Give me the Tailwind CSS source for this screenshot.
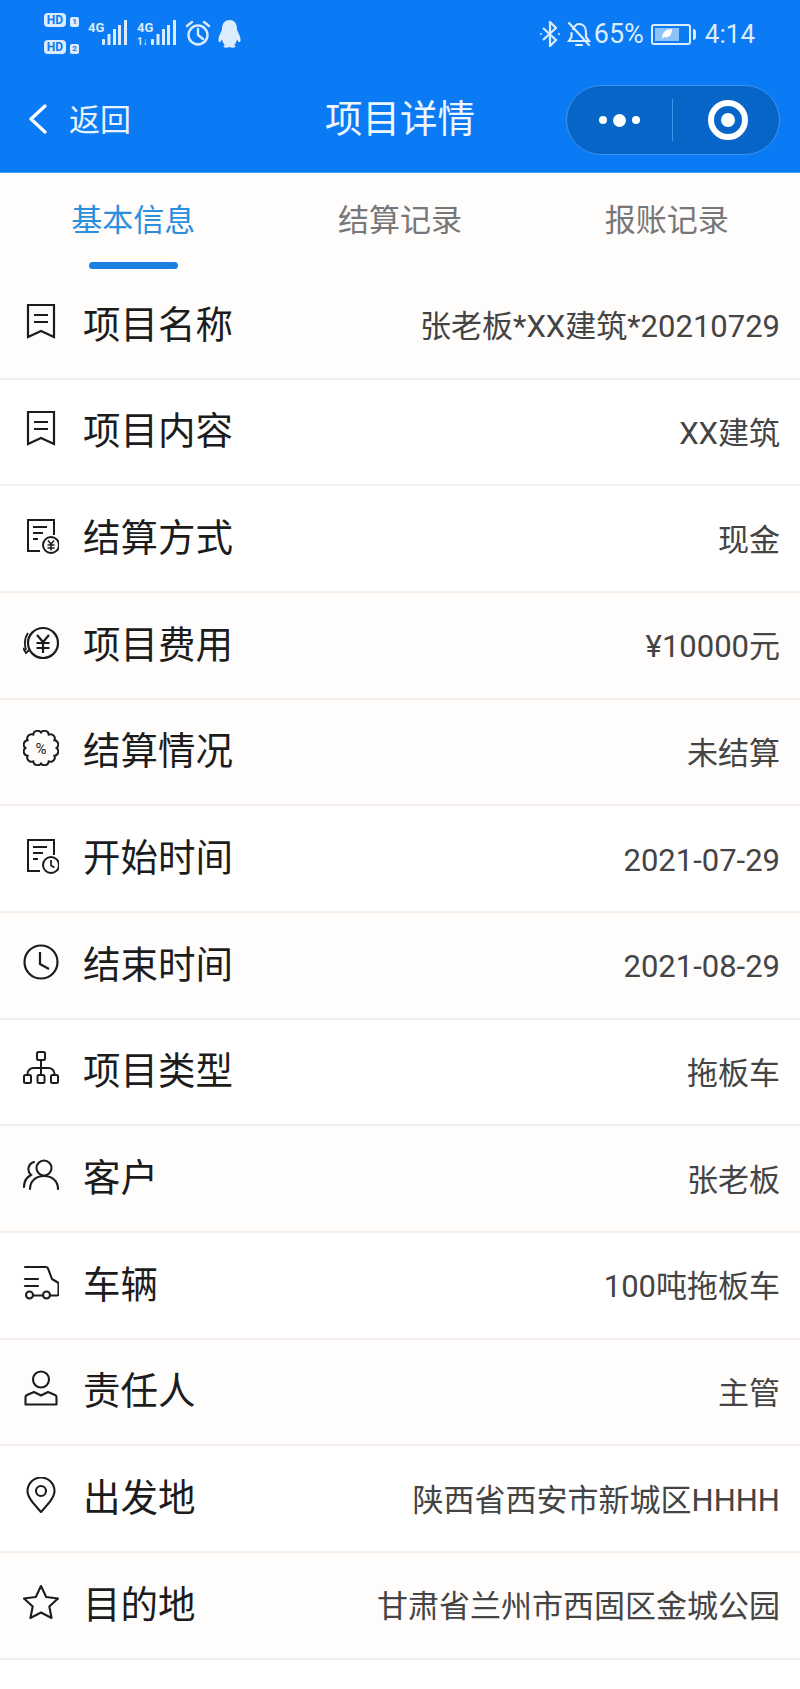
<!DOCTYPE html>
<html lang="zh">
<head>
    <meta charset="UTF-8">
    <meta name="viewport" content="width=device-width, initial-scale=1.0">
    <title>项目详情</title>
    <script src="https://cdn.jsdelivr.net/npm/@tailwindcss/browser@4"></script>
</head>
<body class="bg-white font-['Roboto','Noto_Sans_CJK_SC',sans-serif]">
<div class="w-[800px] h-[1689px] overflow-hidden bg-white">

    <!-- Header -->
    <div class="bg-[#0a7bf4] h-[173px] border-b border-[#3c9bf5]">
        <!-- Status bar -->
        <div class="h-[66px] flex items-start justify-between pl-[44px] pr-[45px] text-[#dcecff]">
            <div class="flex items-start pt-[13px]">
                <div class="flex flex-col gap-[13px] w-[44px]">
                    <div class="flex items-end gap-[4px]">
                        <span class="w-[22px] h-[14px] rounded-[4px] bg-[#dcecff] text-[#0a7bf4] text-[12px] leading-[14px] font-bold text-center">HD</span>
                        <span class="w-[9px] h-[10px] rounded-[2px] bg-[#dcecff] text-[#0a7bf4] text-[8px] leading-[10px] font-bold text-center">1</span>
                    </div>
                    <div class="flex items-end gap-[4px]">
                        <span class="w-[22px] h-[14px] rounded-[4px] bg-[#dcecff] text-[#0a7bf4] text-[12px] leading-[14px] font-bold text-center">HD</span>
                        <span class="w-[9px] h-[10px] rounded-[2px] bg-[#dcecff] text-[#0a7bf4] text-[8px] leading-[10px] font-bold text-center">2</span>
                    </div>
                </div>
                <svg class="w-[40px] h-[34px]" viewBox="0 0 40 34" fill="currentColor">
                    <text x="0" y="19" font-size="13" font-weight="700" font-family="Roboto">4G</text>
                    <rect x="14" y="26" width="3" height="6" rx="1"/><rect x="19.500" y="21" width="3" height="11"/><rect x="25" y="16" width="3" height="16"/><rect x="30" y="12" width="3" height="20"/><rect x="36" y="7" width="3" height="25"/>
                </svg>
                <svg class="w-[40px] h-[34px] ml-[9px]" viewBox="0 0 40 34" fill="currentColor">
                    <text x="0" y="19" font-size="13" font-weight="700" font-family="Roboto">4G</text>
                    <text x="0" y="32" font-size="10" font-weight="700" font-family="Roboto">1↓</text>
                    <rect x="14" y="26" width="3" height="6" rx="1"/><rect x="19.500" y="21" width="3" height="11"/><rect x="25" y="16" width="3" height="16"/><rect x="30" y="12" width="3" height="20"/><rect x="36" y="7" width="3" height="25"/>
                </svg>
                <svg class="w-[26px] h-[28px] ml-[8px] mt-[7px]" viewBox="0 0 26 28" fill="none" stroke="currentColor" stroke-width="2.400" stroke-linecap="round">
                    <circle cx="13" cy="15" r="9.500"/><path d="M13 9v6l5 4"/><path d="M2 6l5-4M24 6l-5-4"/>
                </svg>
                <svg class="w-[23px] h-[28px] ml-[7px] mt-[7px]" viewBox="0 0 23 28" fill="currentColor">
                    <path d="M11.500 0C6 0 4 4.500 4 9c0 2-3 6-3.500 10-.300 2.500.500 3.500 1.500 3 .700-.300 1.300-1.300 2-2.500C5 23 6 24.500 7 25c-1.500.700-2 1.500-1 2.300 1.500.800 4 .500 5.500-.300 1.500.800 4 1.100 5.500.300 1-.800.500-1.600-1-2.300 1-.500 2-2 3-5.500.700 1.200 1.300 2.200 2 2.500 1 .500 1.800-.500 1.500-3C22 15 19 11 19 9c0-4.500-2-9-7.500-9z"/>
                </svg>
            </div>
            <div class="flex items-center pt-[19px]">
                <svg class="w-[22px] h-[26px]" viewBox="0 0 22 26" fill="none" stroke="currentColor" stroke-width="2.200">
                    <path d="M4 7l13 12-6 6V1l6 6L4 19"/><circle cx="2" cy="13" r="1" fill="currentColor" stroke="none"/><circle cx="20" cy="13" r="1" fill="currentColor" stroke="none"/>
                </svg>
                <svg class="w-[24px] h-[26px] ml-[6px]" viewBox="0 0 24 26" fill="none" stroke="currentColor" stroke-width="2.200" stroke-linecap="round">
                    <path d="M6 8c2-4 4-5 6-5 4 0 7 3 7 8v5l3 4H7M4.500 12v4L2 20h4M9 24h6M2 2l20 22"/>
                </svg>
                <span class="text-[27px] leading-[30px] ml-[3px]">65%</span>
                <div class="w-[40px] h-[21px] ml-[7px] rounded-[3px] border-2 border-[#dcecff] p-[2px]">
                    <div class="w-[24px] h-full bg-[#8ec3fa] flex items-center justify-center">
                        <svg class="w-[12px] h-[12px]" viewBox="0 0 12 12" fill="#fff"><path d="M1 11C1 4 5 1 11 1c0 7-4 9-8 8z"/></svg>
                    </div>
                </div>
                <div class="w-[3px] h-[11px] ml-[2px] bg-[#dcecff] rounded-r-sm"></div>
                <span class="text-[26px] leading-[30px] ml-[9px]">4:14</span>
            </div>
        </div>
        <!-- Nav bar -->
        <div class="h-[106px] grid grid-cols-[1fr_auto_1fr] items-center px-[20px] text-white">
            <div class="flex items-center pl-[8px]">
                <svg class="w-[20px] h-[30px]" viewBox="0 0 20 30" fill="none" stroke="currentColor" stroke-width="3.200" stroke-linecap="round" stroke-linejoin="round"><path d="M17 2L3 15l14 13"/></svg>
                <span class="text-[31px] leading-[40px] ml-[21px] mt-[4px] text-[#e8f3ff]">返回</span>
            </div>
            <div class="text-[37.500px] leading-[46px] text-[#eef6ff]">项目详情</div>
            <div class="flex justify-end">
                <div class="w-[214px] h-[70px] mt-[2px] rounded-full bg-[#0865c8] border border-[#3f93ea] flex items-center">
                    <div class="w-[106px] h-[42px] flex items-center justify-center gap-[6px] border-r border-[#3f93ea]">
                        <span class="w-[8px] h-[8px] rounded-full bg-white"></span>
                        <span class="w-[13px] h-[13px] rounded-full bg-white"></span>
                        <span class="w-[8px] h-[8px] rounded-full bg-white"></span>
                    </div>
                    <div class="flex-1 flex items-center justify-center pl-[4px]">
                        <div class="w-[40px] h-[40px] rounded-full border-[6px] border-white flex items-center justify-center">
                            <span class="w-[14px] h-[14px] rounded-full bg-white"></span>
                        </div>
                    </div>
                </div>
            </div>
        </div>
    </div>

    <!-- Tabs -->
    <div class="h-[100px] grid grid-cols-3 bg-[#fffcfc]">
        <div class="flex flex-col items-center pt-[29px]">
            <span class="text-[31px] leading-[38px] text-[#2b8fdd]">基本信息</span>
            <span class="w-[89px] h-[7px] mt-[22px] rounded-full bg-[#1a7fe0]"></span>
        </div>
        <div class="flex flex-col items-center pt-[29px]">
            <span class="text-[31px] leading-[38px] text-[#777]">结算记录</span>
        </div>
        <div class="flex flex-col items-center pt-[29px]">
            <span class="text-[31px] leading-[38px] text-[#777]">报账记录</span>
        </div>
    </div>

    <!-- Detail rows -->
    <div class="text-[#1c1c1c]">
        <div class="h-[106.670px] flex items-center pl-[23px] pr-[20px] border-b-2 border-[#f4efed] bg-[#fffcfc]">
            <svg class="w-9 h-9 mb-[9px] shrink-0" viewBox="0 0 36 36" fill="none" stroke="currentColor" stroke-width="2.200"><path d="M5 2h26v32l-13-6-13 6z"/><path d="M11 12h14M11 19h14"/></svg>
            <span class="ml-[24px] mb-[1px] text-[37.500px] leading-[46px]">项目名称</span>
            <span class="ml-auto mt-[4px] text-[31px] leading-[38px] text-[#444]">张老板*XX建筑*20210729</span>
        </div>
        <div class="h-[106.670px] flex items-center pl-[23px] pr-[20px] border-b-2 border-[#f4efed]">
            <svg class="w-9 h-9 mb-[7px] shrink-0" viewBox="0 0 36 36" fill="none" stroke="currentColor" stroke-width="2.200"><path d="M5 2h26v32l-13-6-13 6z"/><path d="M11 12h14M11 19h14"/></svg>
            <span class="ml-[24px] mb-[1px] text-[37.500px] leading-[46px]">项目内容</span>
            <span class="ml-auto mt-[4px] text-[31px] leading-[38px] text-[#444]">XX建筑</span>
        </div>
        <div class="h-[106.670px] flex items-center pl-[23px] pr-[20px] border-b-2 border-[#f4efed]">
            <svg class="w-9 h-9 mb-[5px] shrink-0" viewBox="0 0 36 36" fill="none" stroke="currentColor" stroke-width="2">
                <path d="M17 33H5V2h26v15"/><path d="M10 9h14M10 15h10M10 21h5"/><circle cx="28" cy="27" r="8"/>
                <path d="M25 22.500l3 3.500 3-3.500M24.500 27h7M24.500 30h7M28 26v6.500" stroke-width="1.500"/>
            </svg>
            <span class="ml-[24px] mb-[1px] text-[37.500px] leading-[46px]">结算方式</span>
            <span class="ml-auto mt-[4px] text-[31px] leading-[38px] text-[#444]">现金</span>
        </div>
        <div class="h-[106.670px] flex items-center pl-[23px] pr-[20px] border-b-2 border-[#f4efed] bg-[#fffcfc]">
            <svg class="w-9 h-9 mb-[5px] shrink-0" viewBox="0 0 36 36" fill="none" stroke="currentColor" stroke-width="2.200">
                <circle cx="20" cy="18" r="15"/>
                <path d="M14 10l6 7 6-7M13.500 18h13M13.500 23h13M20 17v11"/>
                <path d="M5 8C1.500 13 1.500 20 3 25M0 23l3 5 3-3" stroke-width="1.800"/>
            </svg>
            <span class="ml-[24px] mb-[1px] text-[37.500px] leading-[46px]">项目费用</span>
            <span class="ml-auto mt-[4px] text-[31px] leading-[38px] text-[#444]">¥10000元</span>
        </div>
        <div class="h-[106.670px] flex items-center pl-[23px] pr-[20px] border-b-2 border-[#f4efed] bg-[#fffcfc]">
            <svg class="w-9 h-9 mb-[7px] shrink-0" viewBox="0 0 36 36" fill="none" stroke="currentColor" stroke-width="2">
                <path d="M33.500 18A4.300 4.300 0 0 1 31.420 25.750A4.300 4.300 0 0 1 25.750 31.420A4.300 4.300 0 0 1 18 33.500A4.300 4.300 0 0 1 10.250 31.420A4.300 4.300 0 0 1 4.580 25.750A4.300 4.300 0 0 1 2.500 18A4.300 4.300 0 0 1 4.580 10.250A4.300 4.300 0 0 1 10.250 4.580A4.300 4.300 0 0 1 18 2.500A4.300 4.300 0 0 1 25.750 4.580A4.300 4.300 0 0 1 31.420 10.250A4.300 4.300 0 0 1 33.500 18z"/>
                <text x="18" y="23.500" text-anchor="middle" font-size="15" fill="currentColor" stroke="none" font-family="Roboto">%</text>
            </svg>
            <span class="ml-[24px] mb-[1px] text-[37.500px] leading-[46px]">结算情况</span>
            <span class="ml-auto mt-[4px] text-[31px] leading-[38px] text-[#444]">未结算</span>
        </div>
        <div class="h-[106.670px] flex items-center pl-[23px] pr-[20px] border-b-2 border-[#f4efed]">
            <svg class="w-9 h-9 mb-[5px] shrink-0" viewBox="0 0 36 36" fill="none" stroke="currentColor" stroke-width="2">
                <path d="M17 33H5V2h26v15"/><path d="M10 9h14M10 15h10M10 21h5"/><circle cx="28" cy="27" r="8"/>
                <path d="M28 22v5.500l3.500 2" stroke-width="1.700"/>
            </svg>
            <span class="ml-[24px] mb-[1px] text-[37.500px] leading-[46px]">开始时间</span>
            <span class="ml-auto mt-[4px] text-[31px] leading-[38px] text-[#444]">2021-07-29</span>
        </div>
        <div class="h-[106.670px] flex items-center pl-[23px] pr-[20px] border-b-2 border-[#f4efed] bg-[#fffcfc]">
            <svg class="w-9 h-9 mb-[7px] shrink-0" viewBox="0 0 36 36" fill="none" stroke="currentColor" stroke-width="2.200">
                <circle cx="18" cy="18" r="16.500"/><path d="M17 8v12l9 5"/>
            </svg>
            <span class="ml-[24px] mb-[1px] text-[37.500px] leading-[46px]">结束时间</span>
            <span class="ml-auto mt-[4px] text-[31px] leading-[38px] text-[#444]">2021-08-29</span>
        </div>
        <div class="h-[106.670px] flex items-center pl-[23px] pr-[20px] border-b-2 border-[#f4efed]">
            <svg class="w-9 h-9 mb-[7px] shrink-0" viewBox="0 0 36 36" fill="none" stroke="currentColor" stroke-width="2">
                <rect x="14" y="2" width="8" height="8" rx="1.500"/><rect x="1" y="25" width="7" height="8" rx="1.500"/><rect x="14.500" y="25" width="7" height="8" rx="1.500"/><rect x="28" y="25" width="7" height="8" rx="1.500"/>
                <path d="M18 10v15M4.500 25v-1a6 6 0 0 1 6-6h15a6 6 0 0 1 6 6v1"/>
            </svg>
            <span class="ml-[24px] mb-[1px] text-[37.500px] leading-[46px]">项目类型</span>
            <span class="ml-auto mt-[4px] text-[31px] leading-[38px] text-[#444]">拖板车</span>
        </div>
        <div class="h-[106.670px] flex items-center pl-[23px] pr-[20px] border-b-2 border-[#f4efed] bg-[#fffcfc]">
            <svg class="w-9 h-9 mb-[7px] shrink-0" viewBox="0 0 36 36" fill="none" stroke="currentColor" stroke-width="2.100" stroke-linecap="round">
                <circle cx="21" cy="11" r="7.500"/><path d="M7 32c0-8 6-13 14-13s14 5 14 13"/>
                <path d="M1 30c0-6 3-10 7-12-2-2-3-4-2.500-7S8 6 11 5"/>
            </svg>
            <span class="ml-[24px] mb-[1px] text-[37.500px] leading-[46px]">客户</span>
            <span class="ml-auto mt-[4px] text-[31px] leading-[38px] text-[#444]">张老板</span>
        </div>
        <div class="h-[106.670px] flex items-center pl-[23px] pr-[20px] border-b-2 border-[#f4efed]">
            <svg class="w-9 h-9 mb-[7px] shrink-0" viewBox="0 0 36 36" fill="none" stroke="currentColor" stroke-width="2.100" stroke-linecap="round" stroke-linejoin="round">
                <path d="M2 3h21c1 0 1.500.500 2 1.500L29 15l5 3c1 .500 1.500 1 1.500 2v10c0 1-.500 1.500-1.500 1.500h-6"/>
                <path d="M10.500 31.500h9M2 15h13M2 22h13"/><circle cx="6.500" cy="31" r="3.500"/><circle cx="23.500" cy="31" r="3.500"/>
            </svg>
            <span class="ml-[24px] mb-[1px] text-[37.500px] leading-[46px]">车辆</span>
            <span class="ml-auto mt-[4px] text-[31px] leading-[38px] text-[#444]">100吨拖板车</span>
        </div>
        <div class="h-[106.670px] flex items-center pl-[23px] pr-[20px] border-b-2 border-[#f4efed] bg-[#fffcfc]">
            <svg class="w-9 h-9 mb-[7px] shrink-0" viewBox="0 0 36 36" fill="none" stroke="currentColor" stroke-width="2.100" stroke-linejoin="round">
                <circle cx="18" cy="9.500" r="8"/><path d="M2.500 34.500V27c0-1 .500-1.500 1.500-2l7-3 7 3.500 7-3.500 7 3c1 .500 1.500 1 1.500 2v7.500z"/>
            </svg>
            <span class="ml-[24px] mb-[1px] text-[37.500px] leading-[46px]">责任人</span>
            <span class="ml-auto mt-[4px] text-[31px] leading-[38px] text-[#444]">主管</span>
        </div>
        <div class="h-[106.670px] flex items-center pl-[23px] pr-[20px] border-b-2 border-[#f4efed]">
            <svg class="w-9 h-9 mb-[7px] shrink-0" viewBox="0 0 36 36" fill="none" stroke="currentColor" stroke-width="2.100" stroke-linejoin="round">
                <path d="M18 35C10 26 4.500 20 4.500 14a13.500 13.500 0 0 1 27 0c0 6-5.500 12-13.500 21z"/><circle cx="18" cy="14" r="5"/>
            </svg>
            <span class="ml-[24px] mb-[1px] text-[37.500px] leading-[46px]">出发地</span>
            <span class="ml-auto mt-[4px] text-[31px] leading-[38px] text-[#444]">陕西省西安市新城区HHHH</span>
        </div>
        <div class="h-[106.670px] flex items-center pl-[23px] pr-[20px] border-b-2 border-[#f4efed] bg-[#fffcfc]">
            <svg class="w-9 h-9 mb-[7px] shrink-0" viewBox="0 0 36 36" fill="none" stroke="currentColor" stroke-width="2.100" stroke-linejoin="round">
                <path d="M18 2l5.200 11 11.800 1.500-8.700 8 2.300 11.500L18 28.500 7.400 34l2.300-11.500-8.700-8L12.800 13z"/>
            </svg>
            <span class="ml-[24px] mb-[1px] text-[37.500px] leading-[46px]">目的地</span>
            <span class="ml-auto mt-[4px] text-[31px] leading-[38px] text-[#444]">甘肃省兰州市西固区金城公园</span>
        </div>
    </div>
</div>
</body>
</html>
